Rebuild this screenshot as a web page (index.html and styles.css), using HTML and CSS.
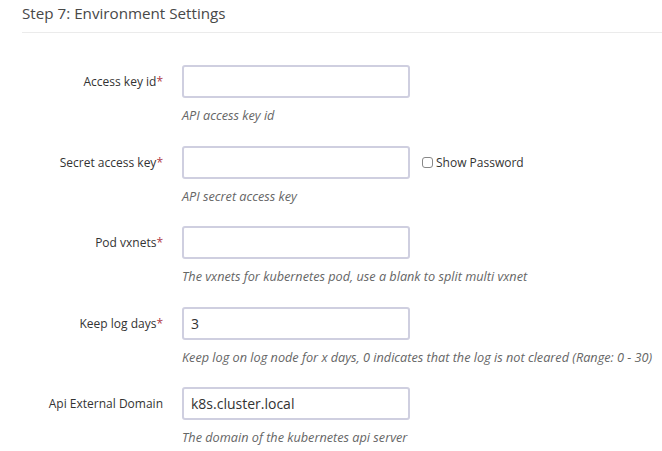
FILE: index.html
```html
<!DOCTYPE html>
<html>
<head>
<meta charset="utf-8">
<link rel="stylesheet" href="styles.css">
</head>
<body>
<div class="page">
  <h3 class="step-title">Step 7: Environment Settings</h3>
  <div class="form">
    <div class="row">
      <label class="label">Access key id<span class="req">*</span></label>
      <div class="field">
        <div class="control"><input class="input" type="text"></div>
        <div class="help">API access key id</div>
      </div>
    </div>
    <div class="row">
      <label class="label">Secret access key<span class="req">*</span></label>
      <div class="field">
        <div class="control">
          <input class="input" type="password">
          <label class="check"><span class="box"></span>Show Password</label>
        </div>
        <div class="help">API secret access key</div>
      </div>
    </div>
    <div class="row">
      <label class="label">Pod vxnets<span class="req">*</span></label>
      <div class="field">
        <div class="control"><input class="input" type="text"></div>
        <div class="help">The vxnets for kubernetes pod, use a blank to split multi vxnet</div>
      </div>
    </div>
    <div class="row">
      <label class="label">Keep log days<span class="req">*</span></label>
      <div class="field">
        <div class="control"><input class="input" type="text" value="3"></div>
        <div class="help">Keep log on log node for x days, 0 indicates that the log is not cleared (Range: 0 - 30)</div>
      </div>
    </div>
    <div class="row">
      <label class="label">Api External Domain</label>
      <div class="field">
        <div class="control"><input class="input" type="text" value="k8s.cluster.local"></div>
        <div class="help">The domain of the kubernetes api server</div>
      </div>
    </div>
  </div>
</div>
</body>
</html>
```

FILE: styles.css
```css
* { box-sizing: border-box; }
html, body { margin: 0; padding: 0; background: #fff; }
body { font-family: "Open Sans", "Noto Sans", sans-serif; color: #333; }
.page { padding-left: 22px; }
.step-title {
  margin: 0;
  font-size: 15.2px;
  font-weight: 400;
  color: #484848;
  line-height: 20px;
  padding-top: 3px;
  padding-bottom: 9px;
  border-bottom: 1px solid #ebebeb;
}
.form { padding-top: 32px; margin-left: -22px; }
.row { display: flex; align-items: flex-start; height: 80.5px; }
.label {
  width: 163px;
  text-align: right;
  font-size: 12px;
  line-height: 33px;
  color: #333;
}
.req { color: #b03a48; }
.field { margin-left: 19px; }
.control { display: flex; align-items: center; }
.input {
  width: 228px;
  height: 33px;
  border: 2px solid #cfcfe0;
  border-radius: 3px;
  padding: 0 7px;
  font-family: "Open Sans", sans-serif;
  font-size: 14px;
  color: #333;
  outline: none;
}
.check {
  display: flex;
  align-items: center;
  margin-left: 12px;
  font-size: 12px;
  color: #333;
}
.box {
  width: 11px;
  height: 11px;
  border: 1px solid #888;
  border-radius: 3px;
  margin-right: 3px;
}
.help {
  margin-top: 9px;
  font-size: 12.7px;
  font-style: italic;
  color: #666;
  line-height: 17px;
}
```
